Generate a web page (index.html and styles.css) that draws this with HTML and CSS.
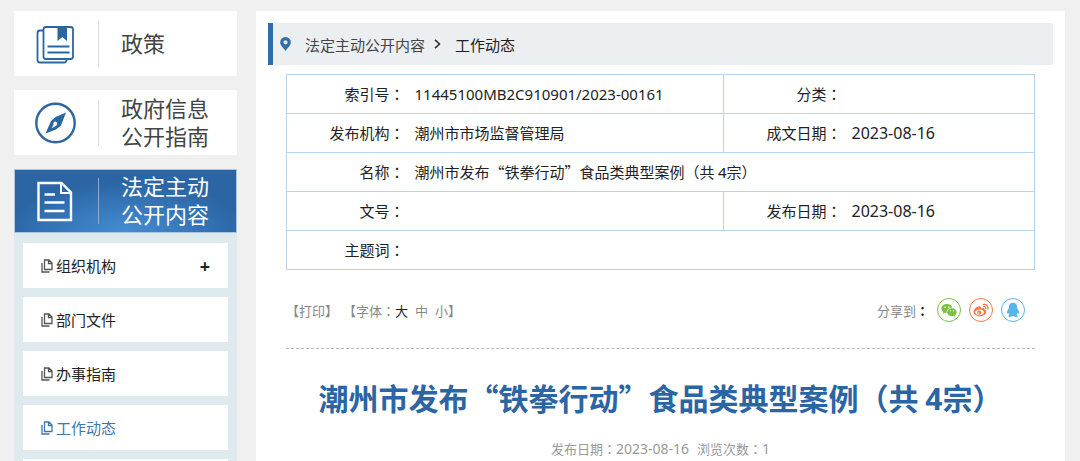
FILE: index.html
```html
<!DOCTYPE html>
<html>
<head>
  <meta charset="utf-8">
  <title>潮州市发布“铁拳行动”食品类典型案例（共 4宗）</title>
  <link rel="stylesheet" href="styles.css">
</head>
<body>
  <div class="page">
    <aside class="sidebar">
      <a class="card" href="#">
        <span class="card-icon">
          <svg width="42" height="42" viewBox="0 0 42 42" fill="none" stroke="#2c669f" stroke-width="1.8">
            <path d="M9 7.500H6a2.500 2.500 0 0 0-2.500 2.500v27a2.500 2.500 0 0 0 2.500 2.500h24a2.500 2.500 0 0 0 2.500-3"/>
            <rect x="9.500" y="4" width="29.500" height="32" rx="2.500"/>
            <path d="M23.500 4h9.500v14l-4.700-4-4.800 4z" fill="#2c669f" stroke="none"/>
            <path d="M13.500 23.500h22M13.500 29.500h22"/>
          </svg>
        </span>
        <span class="card-text">政策</span>
      </a>
      <a class="card" href="#">
        <span class="card-icon">
          <svg width="42" height="42" viewBox="0 0 42 42">
            <circle cx="21.500" cy="21" r="19.200" fill="none" stroke="#2c669f" stroke-width="2.400"/>
            <path fill="#2c669f" fill-rule="evenodd" d="M32 10.500 27 23.500l-5 4L11.500 31.500 17 19l4.500-4zM21.500 19.500a2.300 2.300 0 0 0-2 3.200l-2 3.600 4.300-2.300a2.500 2.500 0 0 0-.3-4.500z"/>
          </svg>
        </span>
        <span class="card-text">政府信息<br>公开指南</span>
      </a>
      <a class="card active" href="#">
        <span class="card-icon">
          <svg width="42" height="42" viewBox="0 0 42 42" fill="none" stroke="#fff" stroke-width="2.400">
            <path d="M4.500 3H27.500l9.500 9.500v27.500H4.500z"/>
            <path d="M27 3v10h10" stroke-width="2"/>
            <path d="M10.500 14.500h10.500M10.500 22.500h20M10.500 31h20"/>
          </svg>
        </span>
        <span class="card-text">法定主动<br>公开内容</span>
      </a>
      <ul class="menu">
        <li><a href="#"><svg class="copy" viewBox="0 0 12 14"><path d="M3.500 1h4.500l3 3v6.500H3.500zM7.500 1v3.500H11M1 4v9h7.500"/></svg>组织机构<span class="plus">+</span></a></li>
        <li><a href="#"><svg class="copy" viewBox="0 0 12 14"><path d="M3.500 1h4.500l3 3v6.500H3.500zM7.500 1v3.500H11M1 4v9h7.500"/></svg>部门文件</a></li>
        <li><a href="#"><svg class="copy" viewBox="0 0 12 14"><path d="M3.500 1h4.500l3 3v6.500H3.500zM7.500 1v3.500H11M1 4v9h7.500"/></svg>办事指南</a></li>
        <li><a class="current" href="#"><svg class="copy" viewBox="0 0 12 14"><path d="M3.500 1h4.500l3 3v6.500H3.500zM7.500 1v3.500H11M1 4v9h7.500"/></svg>工作动态</a></li>
        <li><a href="#"></a></li>
      </ul>
    </aside>

    <main class="main">
      <nav class="crumb">
        <svg width="11" height="14" viewBox="0 0 11 14"><path fill="#2f6ea8" fill-rule="evenodd" d="M5.500 0A5.300 5.300 0 0 0 .2 5.300C.2 8.600 3.500 11 5.500 14c2-3 5.300-5.400 5.300-8.700A5.300 5.300 0 0 0 5.500 0zm0 3.200a2.100 2.100 0 1 1 0 4.200 2.100 2.100 0 0 1 0-4.200z"/></svg>
        <a href="#">法定主动公开内容</a>
        <svg class="arrow" width="7" height="10" viewBox="0 0 7 10"><path d="M1 .8 5.500 5 1 9.200" fill="none" stroke="#333" stroke-width="1.600"/></svg>
        <a class="here" href="#">工作动态</a>
      </nav>

      <div class="content">
        <table class="info">
          <colgroup>
            <col class="col-label"><col class="col-value"><col class="col-label"><col>
          </colgroup>
          <tr>
            <th>索引号<span class="mark">：</span></th><td><span class="code">11445100MB2C910901/2023-00161</span></td>
            <th>分类<span class="mark">：</span></th><td></td>
          </tr>
          <tr>
            <th>发布机构<span class="mark">：</span></th><td>潮州市市场监督管理局</td>
            <th>成文日期<span class="mark">：</span></th><td><span class="date">2023-08-16</span></td>
          </tr>
          <tr>
            <th>名称<span class="mark">：</span></th><td colspan="3">潮州市发布“铁拳行动”食品类典型案例<span class="mark">（</span>共 <span class="code">4</span>宗<span class="mark">）</span></td>
          </tr>
          <tr>
            <th>文号<span class="mark">：</span></th><td></td>
            <th>发布日期<span class="mark">：</span></th><td><span class="date">2023-08-16</span></td>
          </tr>
          <tr>
            <th>主题词<span class="mark">：</span></th><td colspan="3"></td>
          </tr>
        </table>

        <div class="tools">
          <div class="tools-left">
            <button type="button">【打印】</button>
            <div class="sizes">【字体<span class="mark">：</span><button type="button" class="on">大</button><button type="button">中</button><button type="button">小</button>】</div>
          </div>
          <div class="share">
            <span>分享到<b class="mark">：</b></span>
            <a class="wechat" href="#" aria-label="微信">
              <svg width="16" height="16" viewBox="0 0 16 16"><path fill="#7cc144" fill-rule="evenodd" d="M6 2C2.800 2 .3 4 .3 6.600c0 1.500.8 2.700 2 3.500l-.5 1.700 2-1.100 1.700.3C5.200 8 7.600 5.700 11.300 5.700 10.700 3.500 8.600 2 6 2zM4.100 4.400a.8.8 0 1 1 0 1.600.8.8 0 0 1 0-1.600zm3.800 0a.8.8 0 1 1 0 1.600.8.8 0 0 1 0-1.600z"/><path fill="#7cc144" fill-rule="evenodd" d="M11 6.200c-2.800 0-4.900 1.800-4.900 4s2.100 4 4.900 4l1.500-.3 1.700.9-.4-1.500c1.200-.8 1.900-1.900 1.900-3.100 0-2.200-2.100-4-4.700-4zM9.500 8.200a.6.600 0 1 1 0 1.200.6.600 0 0 1 0-1.200zm3 0a.6.600 0 1 1 0 1.200.6.600 0 0 1 0-1.200z"/></svg>
            </a>
            <a class="weibo" href="#" aria-label="微博">
              <svg width="16" height="16" viewBox="0 0 16 16"><path fill="#ff763b" fill-rule="evenodd" d="M6.500 4.200C4 4.200.6 7.200.6 10c0 2.500 2.800 4.300 6 4.300 4 0 6.600-2.200 6.600-4.400 0-1.300-.9-2.100-1.900-2.400.5-1.400-.7-2.200-3.300-1 .5-1.500-.2-2.300-1.500-2.300zM6.500 7.600c2.500 0 4.500 1.200 4.500 2.800s-2 2.800-4.500 2.800S2.200 12 2.200 10.500s1.800-2.900 4.300-2.900z"/><circle cx="6.200" cy="10.600" r="2.100" fill="#ff763b"/><circle cx="5.700" cy="10.900" r=".7" fill="#fff"/><path d="M10.300 2.500c3-.8 5.500 1.700 4.500 4.800M10.600 4.700c1.500-.4 2.500.7 2.100 2.100" fill="none" stroke="#ff763b" stroke-width="1.200" stroke-linecap="round"/></svg>
            </a>
            <a class="qq" href="#" aria-label="QQ">
              <svg width="16" height="16" viewBox="0 0 16 16"><path fill="#56b6e7" d="M8 .8C5.300.8 3.900 2.800 3.900 5v1.300C2.900 7.600 1.800 9.400 1.900 11c0 .8.500.9 1.400-.3.200.8.600 1.500 1.100 2-1.500.7-1.300 2.200.6 2.200 1.200 0 2.200-.3 3-.8.800.5 1.800.8 3 .8 1.900 0 2.100-1.500.6-2.200.5-.5.900-1.200 1.100-2 .9 1.200 1.400 1.100 1.400.3.100-1.600-1-3.400-2-4.700V5C12.100 2.800 10.700.8 8 .8z"/></svg>
            </a>
          </div>
        </div>

        <h1>潮州市发布“铁拳行动”食品类典型案例<span class="mark">（</span>共 <span class="code">4</span>宗<span class="mark">）</span></h1>
        <p class="meta">
          <span>发布日期<span class="mark">：</span><span class="num">2023-08-16</span></span>
          <span>浏览次数<span class="mark">：</span><span class="num">1</span></span>
        </p>
      </div>
    </main>
  </div>
</body>
</html>
```
FILE: styles.css
```css
* {
  box-sizing: border-box;
}

body {
  margin: 0;
  background-color: #f0f0f0;
  font-family: "Noto Sans CJK SC", sans-serif;
  font-size: 15px;
  color: #222;
}

a {
  color: inherit;
  text-decoration: none;
}

svg {
  flex: none;
}

button {
  padding: 0;
  border: 0;
  background: none;
  font: inherit;
  color: inherit;
  cursor: pointer;
}

/* centred colons and brackets */
.mark {
  font-family: "Noto Sans CJK TC", sans-serif;
}

.code,
.date,
.num {
  font-family: "Noto Sans", sans-serif;
}

.date {
  font-size: 16px;
}

.num {
  font-size: 14px;
}

.page {
  display: flex;
  gap: 19px;
  height: 100vh;
  padding: 11px 15px 0 14px;
  overflow: hidden;
}

/* sidebar */
.sidebar {
  flex: none;
  width: 223px;
}

.card {
  display: flex;
  align-items: center;
  height: 65px;
  margin-bottom: 14px;
  background-color: #fff;
  font-size: 22px;
  line-height: 28px;
  color: #444;
}

.card-icon {
  display: flex;
  align-items: center;
  width: 85px;
  height: 46px;
  padding-left: 20px;
  border-right: 1px solid #ddd;
}

.card-text {
  padding: 0 0 4px 22px;
}

.card.active {
  height: 64px;
  margin-bottom: 0;
  border: 1px solid #a9c6e2;
  background: radial-gradient(ellipse 120px 50px at 50% 100%, #448dd3, #2b65a4);
  color: #fff;
}

.active .card-icon {
  width: 84px;
  padding-left: 19px;
  border-color: #8aaed2;
}

.menu {
  display: flex;
  flex-direction: column;
  gap: 9px;
  margin: 0;
  padding: 10px 9px;
  background-color: #dfeaef;
  list-style: none;
}

.menu a {
  display: flex;
  align-items: center;
  height: 45px;
  padding: 0 18px;
  background-color: #fff;
}

.menu .current {
  color: #3d77ad;
}

.copy {
  width: 12px;
  height: 14px;
  margin-right: 3px;
  fill: none;
  stroke: #555;
  stroke-width: 1.3;
}

.current .copy {
  stroke: #3d77ad;
}

.plus {
  margin-left: auto;
  font-family: "Noto Sans", sans-serif;
  font-size: 18px;
  font-weight: bold;
}

/* article */
.main {
  flex: 1;
  padding: 12px;
  background-color: #fff;
}

.crumb {
  display: flex;
  align-items: center;
  height: 42px;
  padding-left: 7px;
  border-left: 5px solid #2f6ea8;
  background-color: #ebeff2;
  color: #444;
}

.crumb a {
  margin-left: 14px;
}

.crumb .arrow {
  margin-left: 9px;
}

.crumb .here {
  color: #222;
}

.content {
  padding: 9px 18px 0 18px;
}

.info {
  width: 100%;
  border: 1px solid #b9d4ea;
  border-collapse: collapse;
  table-layout: fixed;
}

.col-label {
  width: 118px;
}

.col-value {
  width: 319px;
}

.info th,
.info td {
  height: 39px;
  padding: 0;
  border-top: 1px solid #b9d4ea;
  line-height: 24px;
}

.info th {
  border-left: 1px solid #b9d4ea;
  font-weight: normal;
  text-align: right;
}

.info td {
  padding-left: 10px;
}

.tools {
  display: flex;
  justify-content: space-between;
  align-items: center;
  height: 79px;
  padding-top: 2px;
  border-bottom: 1px dashed #bbb;
  font-size: 13px;
  color: #888;
}

.tools-left,
.sizes {
  display: flex;
}

.tools-left {
  gap: 5px;
}

.sizes button + button {
  margin-left: 7px;
}

.sizes .on {
  color: #222;
}

.share {
  display: flex;
  align-items: center;
  gap: 8px;
  padding-right: 10px;
}

.share .mark {
  color: #222;
}

.share a {
  display: flex;
  align-items: center;
  justify-content: center;
  width: 24px;
  height: 24px;
  border: 1px solid;
  border-radius: 50%;
}

.share .wechat {
  color: #7cc144;
}

.share .weibo {
  color: #ff763b;
}

.share .qq {
  color: #56b6e7;
}

h1 {
  margin: 28px 0 0;
  font-size: 30px;
  line-height: 40px;
  text-align: center;
  color: #2b65a4;
}

.meta {
  display: flex;
  justify-content: center;
  gap: 8px;
  margin: 20px 0 0;
  font-size: 13px;
  line-height: 20px;
  color: #999;
}
```
